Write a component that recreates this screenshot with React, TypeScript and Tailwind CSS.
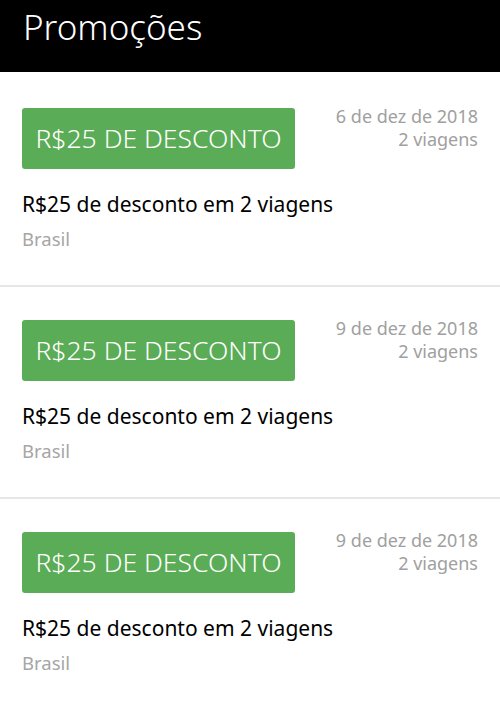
const promos = [
  { date: "6 de dez de 2018", trips: "2 viagens" },
  { date: "9 de dez de 2018", trips: "2 viagens" },
  { date: "9 de dez de 2018", trips: "2 viagens" },
];

const PromoCard = ({ date, trips, first }: { date: string; trips: string; first: boolean }) => {
  return (
    <div
      className={
        first
          ? "h-[215px] border-b-2 border-[#e6e6e6] px-[22px] pt-[36px]"
          : "h-[212px] border-b-2 border-[#e6e6e6] px-[22px] pt-[33px]"
      }
    >
      <div className="flex items-start justify-between">
        <div className="flex h-[61px] w-[273px] items-center justify-center rounded-[3px] bg-[#5aac56] text-[26.5px] font-light text-white">
          R$25 DE DESCONTO
        </div>
        <div className="-mt-[3px] text-right text-[18px] leading-[23px] text-[#a0a0a0]">
          <div>{date}</div>
          <div>{trips}</div>
        </div>
      </div>
      <div className="mt-[21px] text-[21px] leading-[28px] text-black">R$25 de desconto em 2 viagens</div>
      <div className="mt-[9px] text-[18.5px] leading-[24px] text-[#a6a6a6]">Brasil</div>
    </div>
  );
};

export default function App() {
  return (
    <div className="h-[704px] w-[500px] overflow-hidden bg-white font-['Noto_Sans',sans-serif]">
      <div className="h-[72px] bg-black px-[23px] pt-[5px] text-[35px] font-light leading-[44px] text-white">
        Promoções
      </div>
      {promos.map((p, i) => (
        <PromoCard key={i} date={p.date} trips={p.trips} first={i === 0} />
      ))}
    </div>
  );
}
